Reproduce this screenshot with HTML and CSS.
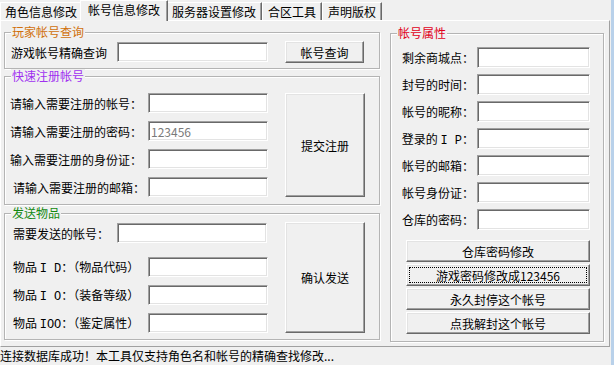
FILE: index.html
```html
<!DOCTYPE html>
<html lang="zh">
<head>
    <meta charset="UTF-8">
    <title>帐号信息修改</title>
    <link rel="stylesheet" href="styles.css">
</head>
<body>
<div class="app">
    <ul class="tabs">
        <li class="tab">角色信息修改</li>
        <li class="tab active">帐号信息修改</li>
        <li class="tab">服务器设置修改</li>
        <li class="tab">合区工具</li>
        <li class="tab">声明版权</li>
    </ul>
    <div class="panel">
        <div class="left">
            <!-- 玩家帐号查询 -->
            <fieldset class="grp">
                <legend class="orange">玩家帐号查询</legend>
                <div class="query">
                    <label>游戏帐号精确查询</label>
                    <input class="box w151" type="text">
                    <button class="btn query-btn">帐号查询</button>
                </div>
            </fieldset>

            <!-- 快速注册帐号 -->
            <fieldset class="grp">
                <legend class="purple">快速注册帐号</legend>
                <div class="reg">
                    <div class="fields">
                        <div class="row"><label class="lb138">请输入需要注册的帐号：</label><input class="box w120" type="text"></div>
                        <div class="row"><label class="lb138">请输入需要注册的密码：</label><input class="box w120 gray" type="text" value="123456"></div>
                        <div class="row"><label class="lb138">输入需要注册的身份证：</label><input class="box w120" type="text"></div>
                        <div class="row"><label class="lb138 pad3">请输入需要注册的邮箱：</label><input class="box w120" type="text"></div>
                    </div>
                    <button class="btn big">提交注册</button>
                </div>
            </fieldset>

            <!-- 发送物品 -->
            <fieldset class="grp send-grp">
                <legend class="green">发送物品</legend>
                <div class="send">
                    <div class="fields">
                        <div class="row first"><label class="lb107">需要发送的帐号：</label><input class="box w150" type="text"></div>
                        <div class="row second"><label class="lb138">物品 <span class="mono">I D</span>：（物品代码）</label><input class="box w120" type="text"></div>
                        <div class="row"><label class="lb138">物品 <span class="mono">I O</span>：（装备等级）</label><input class="box w120" type="text"></div>
                        <div class="row"><label class="lb138">物品 <span class="mono">IOO</span>：（鉴定属性）</label><input class="box w120" type="text"></div>
                    </div>
                    <button class="btn big">确认发送</button>
                </div>
            </fieldset>
        </div>

        <!-- 帐号属性 -->
        <fieldset class="grp attr">
            <legend class="red">帐号属性</legend>
            <div class="attr-list">
                <div class="row"><label>剩余商城点：</label><input class="box w113" type="text"></div>
                <div class="row"><label>封号的时间：</label><input class="box w113" type="text"></div>
                <div class="row"><label>帐号的昵称：</label><input class="box w113" type="text"></div>
                <div class="row"><label>登录的 <span class="mono">I P</span>：</label><input class="box w113" type="text"></div>
                <div class="row"><label>帐号的邮箱：</label><input class="box w113" type="text"></div>
                <div class="row"><label>帐号身份证：</label><input class="box w113" type="text"></div>
                <div class="row"><label>仓库的密码：</label><input class="box w113" type="text"></div>
            </div>
            <div class="actions">
                <button class="btn">仓库密码修改</button>
                <button class="btn focus">游戏密码修改成123456</button>
                <button class="btn">永久封停这个帐号</button>
                <button class="btn">点我解封这个帐号</button>
            </div>
        </fieldset>
    </div>
    <div class="status">连接数据库成功！本工具仅支持角色名和帐号的精确查找修改...</div>
</div>
</body>
</html>
```

FILE: styles.css
```css
*{
    margin: 0;
    padding: 0;
    box-sizing: border-box;
}
body{
    font: 12px "Noto Sans CJK SC", "Noto Sans", sans-serif;
    background: #f0f0f0;
    color: #000;
}
.app{
    width: 614px;
    height: 365px;
    padding-right: 1px;
    border-right: 3px solid #b9d1ea;
}
.mono{
    font-family: "Liberation Mono", monospace;
    font-size: 12px;
}

/* tabs */
.tabs{
    list-style: none;
    display: flex;
    align-items: flex-end;
    height: 20px;
}
.tab{
    height: 18px;
    line-height: 17px;
    padding: 0 5px;
    border: 1px solid #fff;
    border-bottom: none;
    border-right-color: #696969;
    box-shadow: inset -1px 0 #a0a0a0;
    white-space: nowrap;
}
.tab:first-child{
    padding: 0 4px;
}
.tab.active{
    height: 21px;
    line-height: 17px;
    margin: 0 -2px -1px;
    padding: 0 7px;
    position: relative;
    z-index: 1;
    background: #f0f0f0;
}

/* panel */
.panel{
    display: flex;
    gap: 10px;
    height: 327px;
    border: 1px solid #fff;
    border-right-color: #a0a0a0;
    border-bottom-color: #a0a0a0;
    padding: 4px 5px 0 3px;
}
.left{
    width: 376px;
    display: flex;
    flex-direction: column;
}

/* group box */
.grp{
    min-width: 0;
    border: 1px solid #b4b4b4;
    box-shadow: inset 1px 1px #fff, 1px 1px #fff;
}
.grp legend{
    margin-left: 6px;
    padding: 0 1px;
    line-height: 14px;
    background: #f0f0f0;
}
.orange{ color: #d0700c; }
.purple{ color: #a030f0; }
.green{ color: #128a12; }
.red{ color: #e0001a; }

/* controls */
.box{
    height: 20px;
    border: 1px solid;
    border-color: #a0a0a0 #fff #fff #a0a0a0;
    box-shadow: inset 1px 1px #696969, inset -1px -1px #e3e3e3;
    background: #fff;
    font: inherit;
    padding: 0 2px;
    outline: none;
}
.gray{ color: #7a7a7a; }
.w150{ width: 150px; }
.w151{ width: 151px; }
.w120{ width: 120px; }
.w113{ width: 113px; }
.btn{
    font: inherit;
    color: #000;
    background: #f0f0f0;
    border: 1px solid;
    border-color: #fff #696969 #696969 #fff;
    box-shadow: inset -1px -1px #a0a0a0, inset 1px 1px #e3e3e3;
}
.btn.focus{
    outline: 1px dotted #000;
    outline-offset: -4px;
}

/* query */
.query{
    display: flex;
    align-items: center;
    padding: 2px 0 5px 6px;
}
.query label{ width: 106px; }
.query-btn{
    margin-left: 17px;
    width: 79px;
    height: 22px;
}

/* register / send */
.reg,
.send{
    display: flex;
    padding: 10px 0 7px 5px;
}
.send{ padding: 2px 0 6px 5px; }
.fields{
    width: 258px;
    display: flex;
    flex-direction: column;
    gap: 8px;
}
.row{
    display: flex;
    align-items: center;
}
.lb138{ width: 138px; white-space: nowrap; }
.lb107{ width: 107px; padding-left: 3px; white-space: nowrap; }
.send .lb138{ padding-left: 3px; }
.pad3{ padding-left: 3px; }
.send .first{ margin-top: 1px; }
.send .second{ margin-top: 6px; }
.big{
    margin-left: 17px;
    width: 80px;
}
.send-grp{ margin-top: 1px; }

/* attributes */
.attr{
    width: 214px;
    margin-top: 1px;
    align-self: flex-start;
    padding-bottom: 7px;
}
.attr-list{
    display: flex;
    flex-direction: column;
    gap: 6px;
    padding-top: 7px;
}
.attr-list label{
    width: 83px;
    text-align: right;
    white-space: nowrap;
}
.attr-list .box{
    height: 21px;
    margin-left: 3px;
}
.actions{
    display: flex;
    flex-direction: column;
    gap: 2px;
    margin: 10px 0 0 15px;
}
.actions .btn{
    width: 184px;
    height: 22px;
}

.status{
    height: 18px;
    line-height: 18px;
    white-space: nowrap;
}
```
